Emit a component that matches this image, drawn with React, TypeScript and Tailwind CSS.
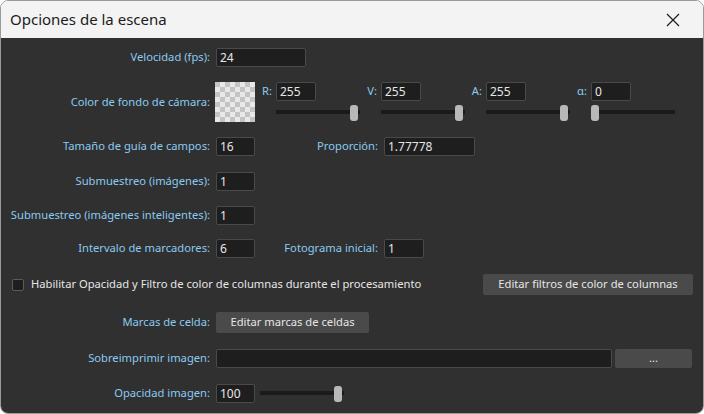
import React from "react";

const LABEL = "text-[#8acbf1]";

function Field({ w, value }: { w: string; value?: string }) {
  return (
    <div
      className={`h-[19px] ${w} bg-[#1e1e1e] border border-[#4a4a4a] rounded-[2px] text-[12px] leading-[17px] text-[#e6e6e6] pl-[3px] whitespace-nowrap overflow-hidden`}
    >
      {value}
    </div>
  );
}

function Slider({ pos }: { pos: "start" | "end" }) {
  return (
    <div className="relative w-[84px] h-[16px]">
      <div className="absolute left-0 right-0 top-[5px] h-[4px] bg-[#1a1a1a]" />
      <div
        className={`absolute top-0 w-[8px] h-[16px] rounded-[3px] bg-[#b8b8b8] ${pos === "end" ? "right-[2px]" : "left-0"}`}
      />
    </div>
  );
}

function Row({ label, children, className = "" }: { label: string; children?: React.ReactNode; className?: string }) {
  return (
    <div className={`flex items-center h-[19px] ${className}`}>
      <div className={`w-[209px] text-right whitespace-nowrap ${LABEL}`}>{label}</div>
      <div className="ml-[6px] flex items-center">{children}</div>
    </div>
  );
}

function ColorGroup({ label, value, pos }: { label: string; value: string; pos: "start" | "end" }) {
  return (
    <div className="flex items-start w-[105px]">
      <div className={`w-[21px] h-[19px] flex items-center justify-end pr-[4px] ${LABEL}`}>{label}</div>
      <div className="flex flex-col">
        <Field w="w-[40px]" value={value} />
        <div className="mt-[4px]">
          <Slider pos={pos} />
        </div>
      </div>
    </div>
  );
}

function Checker() {
  return (
    <svg width="40" height="40" viewBox="0 0 40 40">
      <defs>
        <pattern id="chk" width="10" height="10" patternUnits="userSpaceOnUse">
          <rect width="10" height="10" fill="#e8e8e8" />
          <rect width="5" height="5" fill="#c4c4c4" />
          <rect x="5" y="5" width="5" height="5" fill="#c4c4c4" />
        </pattern>
      </defs>
      <rect width="40" height="40" fill="url(#chk)" />
    </svg>
  );
}

export default function App() {
  return (
    <div className="w-[704px] h-[414px] bg-white font-['Noto_Sans',sans-serif] text-[11.2px]">
      <div className="w-[704px] h-[414px] border border-[#9a9a9a] rounded-[8px] overflow-hidden flex flex-col">
        <div className="h-[37px] bg-[#f3f3f3] flex items-center px-[9px] shrink-0">
          <span className="text-[15px] text-[#1b1b1b]">Opciones de la escena</span>
          <svg className="ml-auto mr-[14px]" width="14" height="14" viewBox="0 0 14 14">
            <path d="M1 1 L13 13 M13 1 L1 13" stroke="#1b1b1b" strokeWidth="1.2" />
          </svg>
        </div>
        <div className="flex-1 bg-[#303030] pt-[10px] flex flex-col">
          <Row label="Velocidad (fps):">
            <Field w="w-[90px]" value="24" />
          </Row>

          <div className="flex items-start h-[40px] mt-[15px]">
            <div className={`w-[209px] h-[40px] flex items-center justify-end whitespace-nowrap ${LABEL}`}>
              Color de fondo de cámara:
            </div>
            <div className="ml-[5px]">
              <Checker />
            </div>
            <div className="flex">
              <ColorGroup label="R:" value="255" pos="end" />
              <ColorGroup label="V:" value="255" pos="end" />
              <ColorGroup label="A:" value="255" pos="end" />
              <ColorGroup label="α:" value="0" pos="start" />
            </div>
          </div>

          <Row label="Tamaño de guía de campos:" className="mt-[15px]">
            <Field w="w-[39px]" value="16" />
            <div className={`w-[123px] text-right ${LABEL}`}>Proporción:</div>
            <div className="ml-[6px]">
              <Field w="w-[91px]" value="1.77778" />
            </div>
          </Row>

          <Row label="Submuestreo (imágenes):" className="mt-[16px]">
            <Field w="w-[39px]" value="1" />
          </Row>

          <Row label="Submuestreo (imágenes inteligentes):" className="mt-[15px]">
            <Field w="w-[39px]" value="1" />
          </Row>

          <Row label="Intervalo de marcadores:" className="mt-[14px]">
            <Field w="w-[39px]" value="6" />
            <div className={`w-[123px] text-right whitespace-nowrap ${LABEL}`}>Fotograma inicial:</div>
            <div className="ml-[6px]">
              <Field w="w-[40px]" value="1" />
            </div>
          </Row>

          <div className="flex items-center h-[21px] mt-[16px]">
            <div className="ml-[11px] w-[12px] h-[12px] bg-[#1e1e1e] border border-[#5a5a5a] rounded-[2px]" />
            <span className="ml-[7px] text-[#e6e6e6] whitespace-nowrap">
              Habilitar Opacidad y Filtro de color de columnas durante el procesamiento
            </span>
            <div className="ml-auto mr-[10px] w-[210px] h-[21px] bg-[#4a4a4a] rounded-[2px] flex items-center justify-center text-[#e6e6e6] whitespace-nowrap">
              Editar filtros de color de columnas
            </div>
          </div>

          <div className="flex items-center h-[21px] mt-[17px]">
            <div className={`w-[209px] text-right ${LABEL}`}>Marcas de celda:</div>
            <div className="ml-[6px] w-[153px] h-[21px] bg-[#4a4a4a] rounded-[2px] flex items-center justify-center text-[#e6e6e6] whitespace-nowrap">
              Editar marcas de celdas
            </div>
          </div>

          <Row label="Sobreimprimir imagen:" className="mt-[16px]">
            <Field w="w-[396px]" />
            <div className="ml-[3px] w-[77px] h-[19px] bg-[#4a4a4a] rounded-[2px] flex items-center justify-center text-[#e6e6e6] text-[11px]">
              ...
            </div>
          </Row>

          <Row label="Opacidad imagen:" className="mt-[16px]">
            <Field w="w-[39px]" value="100" />
            <div className="ml-[5px]">
              <Slider pos="end" />
            </div>
          </Row>
        </div>
      </div>
    </div>
  );
}
